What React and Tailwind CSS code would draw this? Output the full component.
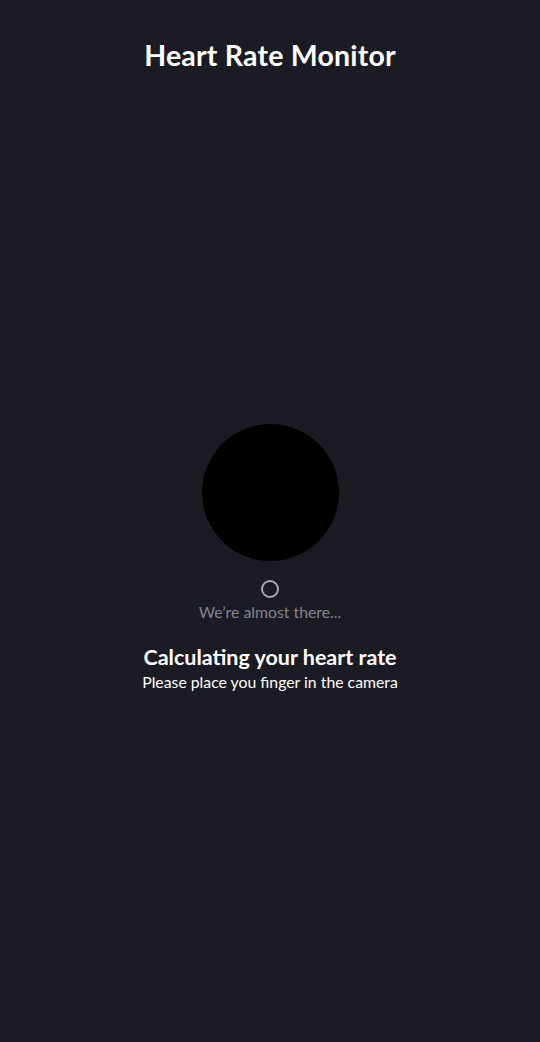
export default function App() {
  return (
    <div className="w-[540px] h-[1042px] bg-[#1b1b23] flex flex-col items-center text-white" style={{ fontFamily: "Lato, 'Noto Sans', sans-serif" }}>
      <h1 className="mt-[37px] text-[28.5px] leading-[36px] font-bold tracking-[0.2px]">Heart Rate Monitor</h1>
      <div className="mt-[351px] w-[137px] h-[137px] rounded-full bg-black"></div>
      <div className="mt-[19px] w-[18px] h-[18px] rounded-full border-2 border-[#a8a8ae]"></div>
      <p className="mt-[4px] text-[15.8px] leading-[20px] text-[#85858d]">We’re almost there...</p>
      <p className="mt-[22px] text-[21.5px] leading-[26px] font-bold">Calculating your heart rate</p>
      <p className="mt-[2px] text-[15.8px] leading-[20px]">Please place you finger in the camera</p>
    </div>
  );
}
